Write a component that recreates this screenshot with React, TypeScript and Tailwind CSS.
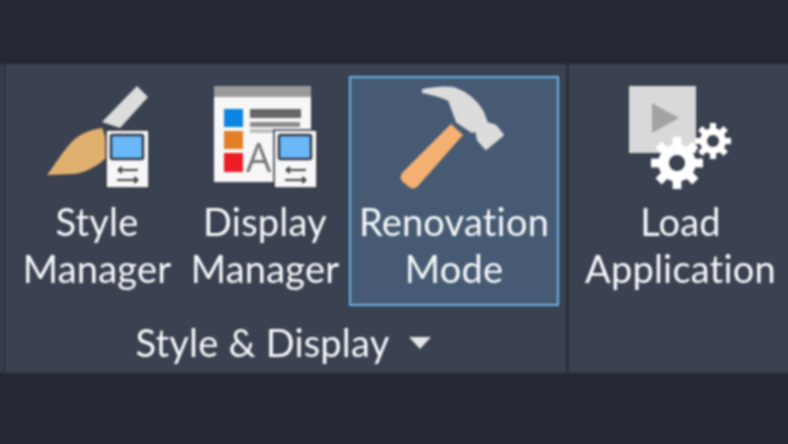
import React from 'react';

const TabletBadge = () => (
  <>
    <rect x="0" y="0" width="43" height="58" fill="#f7f7f7" stroke="#2b303b" strokeWidth="1.5" />
    <rect x="5" y="5" width="32" height="24" rx="1.5" fill="#6ab8f7" stroke="#333b4a" strokeWidth="2.5" />
    <path d="M12 40h20M12 40l4-3M12 40l4 3" fill="none" stroke="#444" strokeWidth="2" />
    <path d="M32 50H11M32 50l-4-3M32 50l-4 3" fill="none" stroke="#444" strokeWidth="2" />
  </>
);

const StyleIcon = () => (
  <svg width="104" height="108" viewBox="0 0 104 108">
    <path d="M91 0 102 11 74 42 56 36z" fill="#dcdcdc" />
    <path d="M1 89C10 78 18 62 30 52 38 46 48 43 56 42 60 50 61 60 60 72L54 77C46 83 36 87 28 88z" fill="#e0b06f" />
    <g transform="translate(60 44)"><TabletBadge /></g>
  </svg>
);

const DisplayIcon = () => (
  <svg width="104" height="104" viewBox="0 0 104 104">
    <rect x="0" y="11" width="97" height="85" fill="#f7f7f7" />
    <rect x="0" y="0" width="97" height="11" fill="#9a9a9a" />
    <rect x="10" y="23" width="19" height="18" fill="#0b84e3" />
    <rect x="10" y="45" width="19" height="18" fill="#e27f28" />
    <rect x="10" y="67" width="19" height="19" fill="#ee1c25" />
    <rect x="36" y="23" width="51" height="9" fill="#666" />
    <rect x="36" y="36" width="50" height="5" fill="#8b8b8b" />
    <rect x="36" y="43" width="24" height="4" fill="#bdbdbd" />
    <text x="32" y="86" fontFamily="'Open Sans', sans-serif" fontSize="40" fill="#777">A</text>
    <g transform="translate(60 44)"><TabletBadge /></g>
  </svg>
);

const HammerIcon = () => (
  <svg width="108" height="108" viewBox="0 0 108 108">
    <path d="M52 38 64 49 19 100c-3 3-6 3-9 1l-6-5c-3-3-3-6-1-9z" fill="#f4b070" />
    <path
      d="M24 4C35 1 50 1 57 3 68 7 78 16 84 26L88 37 97 40 104 49 87 63 79 54 77 44 73 46 58 36 50 14C42 10 32 8 24 6z"
      fill="#dcdcdc"
      stroke="#dcdcdc"
      strokeWidth="2"
      strokeLinejoin="round"
    />
  </svg>
);

const Gear = ({ cx, cy, r, hole }: { cx: number; cy: number; r: number; hole: number }) => (
  <g transform={`translate(${cx} ${cy})`}>
    {[0, 45, 90, 135, 180, 225, 270, 315].map((a) => (
      <rect key={a} x={-r * 0.17} y={-r} width={r * 0.34} height={r * 0.5} fill="#ffffff" transform={`rotate(${a})`} />
    ))}
    <circle r={r * 0.72} fill="#ffffff" />
    <circle r={hole} fill="#3a4150" />
  </g>
);

const LoadIcon = () => (
  <svg width="104" height="104" viewBox="0 0 104 104">
    <rect x="0" y="0" width="67" height="67" fill="#d9d9d9" />
    <path d="M23 17v30l27-15z" fill="#a3a3a3" />
    <Gear cx="48" cy="77" r="26" hole="8" />
    <Gear cx="84" cy="55" r="18" hole="6" />
  </svg>
);

type ToolProps = { lines: string[]; icon: React.ReactNode; className: string; iconClass: string };

const Tool = ({ lines, icon, className, iconClass }: ToolProps) => (
  <div className={`flex flex-col items-center ${className}`}>
    <div className={`flex justify-center ${iconClass}`}>{icon}</div>
    {lines.map((l) => (
      <div key={l} className="h-[47px] whitespace-nowrap text-center text-[38px] leading-[47px] tracking-[0.2px] text-[#f6f8fa] [font-variant-ligatures:none]">
        {l}
      </div>
    ))}
  </div>
);

export default function App() {
  return (
    <div className="h-[444px] w-[788px] overflow-hidden bg-[#232833]">
      {/* blur sits on an oversized wrapper so the page edges do not fade to white */}
      <div className="-mx-4 -mt-4 bg-[#232833] px-4 pt-4 pb-[87px] font-['Lato',sans-serif] blur-[0.9px]">
        <div className="h-16" />
        <div className="-mr-4 flex h-[309px] bg-[#3a4150] pl-[3px]">
          <div className="w-[2px] bg-[#2a2f3b]" />
          <div className="flex w-[561px] flex-col">
            <div className="flex h-[242px] pt-3 pl-[8px]">
              <Tool
                lines={['Style', 'Manager']}
                icon={<StyleIcon />}
                className="h-[228px] w-[168px]"
                iconClass="h-[122px] w-full pt-[10px] pl-[2px]"
              />
              <Tool
                lines={['Display', 'Manager']}
                icon={<DisplayIcon />}
                className="h-[228px] w-[168px]"
                iconClass="h-[122px] w-full pt-[10px] pl-[2px]"
              />
              <div className="h-[230px] w-[210px] border-2 border-[#6ab2e8] bg-[#465b73]">
                <Tool
                  lines={['Renovation', 'Mode']}
                  icon={<HammerIcon />}
                  className="w-full"
                  iconClass="h-[120px] w-full pt-[8px] pr-[2px]"
                />
              </div>
            </div>
            <div className="flex flex-1 items-center justify-center gap-[20px] pt-[5px] pr-[4px] text-[38px] leading-[47px] tracking-[0.2px] text-[#f6f8fa] [font-variant-ligatures:none]">
              <span>Style &amp; Display</span>
              <span className="mt-[2px] h-0 w-0 border-x-[11px] border-t-[12px] border-x-transparent border-t-[#e6e6e6]" />
            </div>
          </div>
          <div className="w-[3px] bg-[#2a2f3b]" />
          <div className="flex-1 pt-3 pr-4">
            <Tool
              lines={['Load', 'Application']}
              icon={<LoadIcon />}
              className="w-full pl-[4px]"
              iconClass="h-[122px] w-full pt-[10px]"
            />
          </div>
        </div>
      </div>
    </div>
  );
}
